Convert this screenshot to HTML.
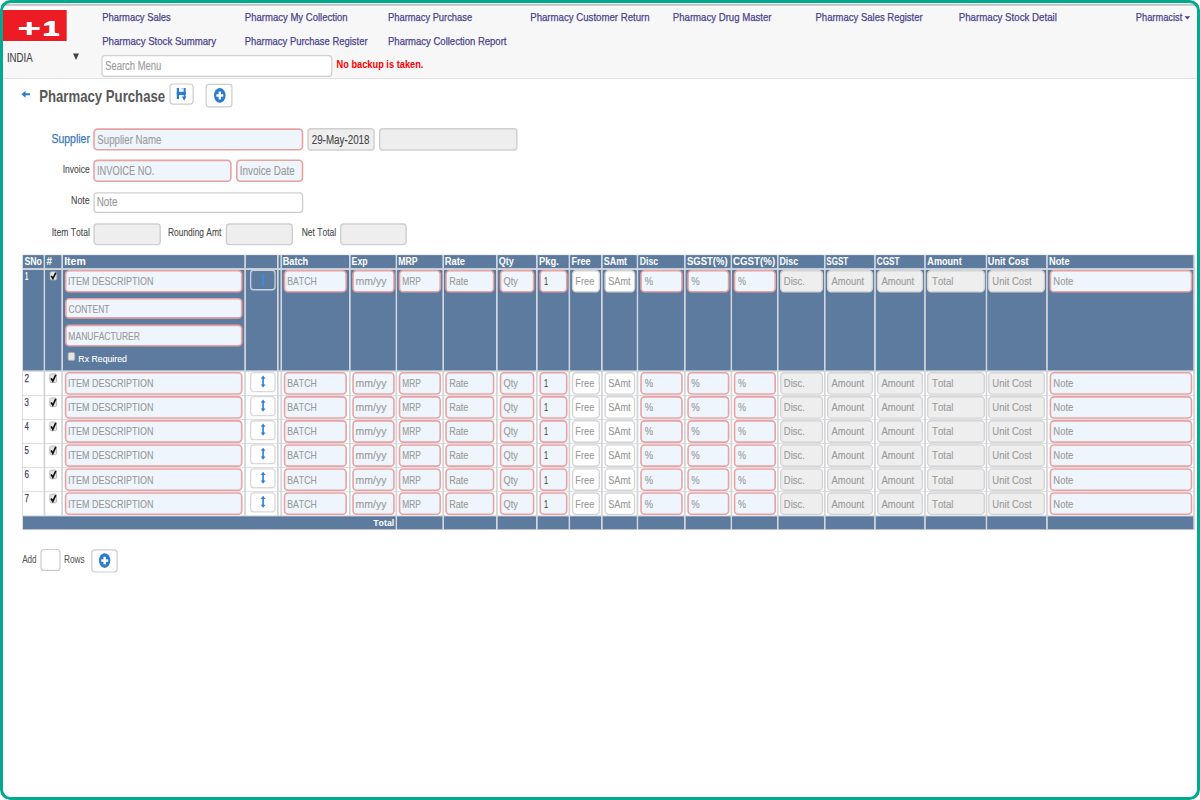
<!DOCTYPE html>
<html><head><meta charset="utf-8"><style>
html,body{margin:0;padding:0;background:#fff;}
svg{display:block;font-family:"Liberation Sans",sans-serif;font-kerning:none;}
</style></head><body>
<svg width="1200" height="800" viewBox="0 0 1200 800">
<defs><clipPath id="fr"><rect x="0" y="0" width="1200" height="800" rx="10" ry="10"/></clipPath></defs>
<rect x="0" y="0" width="1200" height="800" fill="#fff"/>
<g clip-path="url(#fr)">
<rect x="0.00" y="0.00" width="1200.00" height="79.00" rx="0.00" fill="#f7f7f7"/>
<rect x="0.00" y="3.00" width="1200.00" height="1.00" rx="0.00" fill="#efe6e8"/>
<rect x="0.00" y="4.00" width="1200.00" height="2.00" rx="0.00" fill="#c8c6c9"/>
<rect x="0.00" y="6.00" width="1200.00" height="1.00" rx="0.00" fill="#ffffff"/>
<rect x="0.00" y="78.00" width="1200.00" height="1.00" rx="0.00" fill="#e2e2e2"/>
<rect x="3.00" y="6.00" width="65.00" height="37.00" rx="0.00" fill="#fbfdfd"/>
<rect x="3.00" y="10.00" width="63.70" height="31.00" rx="0.00" fill="#ed1c24"/>
<rect x="18.80" y="27.00" width="20.80" height="3.00" rx="0.00" fill="#ffffff"/>
<rect x="26.70" y="22.00" width="5.00" height="13.00" rx="0.00" fill="#ffffff"/>
<path d="M44 24.1 Q46.5 22.2 49.8 21 L54.75 21 L54.75 32.6 Q55.3 33.3 59.25 33.4 L59.25 36 L43.75 36 L43.75 33.4 Q48.7 33.3 49.25 32.6 L49.25 25.3 Q46.2 25.3 44.7 25.9 Q43.5 25.6 44 24.1 Z" fill="#fff"/>
<text x="102.23" y="21.00" font-size="11.00" fill="#4a438e" stroke="#4a438e" stroke-width="0.25" textLength="68.51" lengthAdjust="spacingAndGlyphs">Pharmacy Sales</text>
<text x="244.82" y="21.00" font-size="11.00" fill="#4a438e" stroke="#4a438e" stroke-width="0.25" textLength="102.80" lengthAdjust="spacingAndGlyphs">Pharmacy My Collection</text>
<text x="388.03" y="21.00" font-size="11.00" fill="#4a438e" stroke="#4a438e" stroke-width="0.25" textLength="84.08" lengthAdjust="spacingAndGlyphs">Pharmacy Purchase</text>
<text x="530.21" y="21.00" font-size="11.00" fill="#4a438e" stroke="#4a438e" stroke-width="0.25" textLength="119.42" lengthAdjust="spacingAndGlyphs">Pharmacy Customer Return</text>
<text x="672.81" y="21.00" font-size="11.00" fill="#4a438e" stroke="#4a438e" stroke-width="0.25" textLength="98.75" lengthAdjust="spacingAndGlyphs">Pharmacy Drug Master</text>
<text x="815.52" y="21.00" font-size="11.00" fill="#4a438e" stroke="#4a438e" stroke-width="0.25" textLength="107.14" lengthAdjust="spacingAndGlyphs">Pharmacy Sales Register</text>
<text x="958.70" y="21.00" font-size="11.00" fill="#4a438e" stroke="#4a438e" stroke-width="0.25" textLength="98.15" lengthAdjust="spacingAndGlyphs">Pharmacy Stock Detail</text>
<text x="102.21" y="44.70" font-size="11.00" fill="#4a438e" stroke="#4a438e" stroke-width="0.25" textLength="113.81" lengthAdjust="spacingAndGlyphs">Pharmacy Stock Summary</text>
<text x="244.83" y="44.70" font-size="11.00" fill="#4a438e" stroke="#4a438e" stroke-width="0.25" textLength="122.73" lengthAdjust="spacingAndGlyphs">Pharmacy Purchase Register</text>
<text x="388.02" y="44.70" font-size="11.00" fill="#4a438e" stroke="#4a438e" stroke-width="0.25" textLength="118.45" lengthAdjust="spacingAndGlyphs">Pharmacy Collection Report</text>
<text x="1135.84" y="21.00" font-size="11.00" fill="#4a438e" stroke="#4a438e" stroke-width="0.25" textLength="46.43" lengthAdjust="spacingAndGlyphs">Pharmacist</text>
<path d="M1184.5 16.2 L1190.3 16.2 L1187.4 19.4 Z" fill="#4a438e"/>
<text x="6.91" y="61.70" font-size="12.00" fill="#444444" stroke="#444444" stroke-width="0.10" textLength="25.81" lengthAdjust="spacingAndGlyphs">INDIA</text>
<path d="M73 53.5 L79 53.5 L76 60 Z" fill="#444"/>
<rect x="102.00" y="55.60" width="229.80" height="20.80" rx="3.00" fill="#ffffff" stroke="#cfcfcf" stroke-width="1.20"/>
<text x="105.17" y="70.40" font-size="12.00" fill="#9a9a9a" stroke="#9a9a9a" stroke-width="0.12" textLength="56.05" lengthAdjust="spacingAndGlyphs">Search Menu</text>
<text x="336.48" y="67.70" font-size="10.00" fill="#ff0000" font-weight="bold" textLength="86.96" lengthAdjust="spacingAndGlyphs">No backup is taken.</text>
<path d="M21.5 94.2 L25.5 90.8 L25.5 93.2 L30 93.2 L30 95.2 L25.5 95.2 L25.5 97.7 Z" fill="#2b7bd0"/>
<text x="39.17" y="101.75" font-size="16.50" fill="#585858" font-weight="bold" textLength="125.98" lengthAdjust="spacingAndGlyphs">Pharmacy Purchase</text>
<rect x="170.00" y="84.00" width="23.15" height="20.10" rx="3.00" fill="#ffffff" stroke="#cccccc" stroke-width="1.20"/>
<g fill="#2b7bd0"><rect x="176.8" y="87.9" width="2.2" height="11.1"/><rect x="176.8" y="91.8" width="8.9" height="3.3"/><rect x="183.6" y="88" width="2.1" height="7.2" rx="0.6"/><rect x="181.4" y="88" width="1.2" height="1.6" opacity="0.5"/><rect x="183.8" y="95" width="1.6" height="2.5"/><path d="M181.9 96.6 L186.4 96.6 L184.15 100.8 Z"/></g>
<rect x="206.20" y="84.35" width="25.70" height="22.55" rx="3.00" fill="#ffffff" stroke="#cccccc" stroke-width="1.20"/>
<ellipse cx="219.8" cy="95.45" rx="5.8" ry="7.35" fill="#2b7bd0"/><rect x="216.3" y="94.3" width="7" height="2.4" fill="#fff"/><rect x="218.6" y="91.6" width="2.4" height="7.8" fill="#fff"/>
<text x="51.53" y="142.50" font-size="12.00" fill="#3b7ac0" stroke="#3b7ac0" stroke-width="0.25" textLength="38.35" lengthAdjust="spacingAndGlyphs">Supplier</text>
<rect x="94.00" y="129.10" width="208.50" height="20.70" rx="3.50" fill="#eef5fd" stroke="#e8a2a2" stroke-width="1.60"/>
<text x="97.36" y="143.75" font-size="12.00" fill="#9a9a9a" stroke="#9a9a9a" stroke-width="0.12" textLength="64.02" lengthAdjust="spacingAndGlyphs">Supplier Name</text>
<rect x="308.00" y="128.70" width="66.05" height="21.30" rx="3.00" fill="#eeeeee" stroke="#cfcfcf" stroke-width="1.40"/>
<text x="311.71" y="144.00" font-size="12.00" fill="#444444" stroke="#444444" stroke-width="0.10" textLength="57.82" lengthAdjust="spacingAndGlyphs">29-May-2018</text>
<rect x="379.70" y="128.70" width="137.20" height="21.30" rx="3.00" fill="#eeeeee" stroke="#cfcfcf" stroke-width="1.40"/>
<text x="62.71" y="172.50" font-size="10.50" fill="#484848" stroke="#484848" stroke-width="0.10" textLength="26.96" lengthAdjust="spacingAndGlyphs">Invoice</text>
<rect x="94.00" y="160.40" width="136.90" height="20.90" rx="3.50" fill="#eef5fd" stroke="#e8a2a2" stroke-width="1.60"/>
<text x="96.94" y="174.60" font-size="12.00" fill="#9a9a9a" stroke="#9a9a9a" stroke-width="0.12" textLength="57.36" lengthAdjust="spacingAndGlyphs">INVOICE NO.</text>
<rect x="236.80" y="160.20" width="65.70" height="21.10" rx="3.50" fill="#eef5fd" stroke="#e8a2a2" stroke-width="1.60"/>
<text x="239.79" y="174.60" font-size="12.00" fill="#9a9a9a" stroke="#9a9a9a" stroke-width="0.12" textLength="54.95" lengthAdjust="spacingAndGlyphs">Invoice Date</text>
<text x="71.08" y="204.10" font-size="10.50" fill="#484848" stroke="#484848" stroke-width="0.10" textLength="18.61" lengthAdjust="spacingAndGlyphs">Note</text>
<rect x="94.10" y="192.90" width="208.50" height="19.50" rx="3.00" fill="#ffffff" stroke="#cfcfcf" stroke-width="1.40"/>
<text x="96.69" y="206.40" font-size="12.00" fill="#9a9a9a" stroke="#9a9a9a" stroke-width="0.12" textLength="20.95" lengthAdjust="spacingAndGlyphs">Note</text>
<text x="51.71" y="235.60" font-size="10.50" fill="#484848" stroke="#484848" stroke-width="0.10" textLength="38.17" lengthAdjust="spacingAndGlyphs">Item Total</text>
<rect x="94.10" y="223.95" width="66.10" height="20.65" rx="3.00" fill="#eeeeee" stroke="#cfcfcf" stroke-width="1.40"/>
<text x="167.91" y="235.60" font-size="10.50" fill="#484848" stroke="#484848" stroke-width="0.10" textLength="53.45" lengthAdjust="spacingAndGlyphs">Rounding Amt</text>
<rect x="226.40" y="223.95" width="65.90" height="20.65" rx="3.00" fill="#eeeeee" stroke="#cfcfcf" stroke-width="1.40"/>
<text x="301.70" y="235.60" font-size="10.50" fill="#484848" stroke="#484848" stroke-width="0.10" textLength="34.57" lengthAdjust="spacingAndGlyphs">Net Total</text>
<rect x="340.70" y="223.95" width="65.40" height="20.65" rx="3.00" fill="#eeeeee" stroke="#cfcfcf" stroke-width="1.40"/>
<rect x="22.20" y="254.60" width="1172.80" height="275.40" rx="0.00" fill="#d2d5da"/>
<rect x="23.40" y="255.70" width="19.70" height="12.00" rx="0.00" fill="#5d7b9e" stroke="#52729a" stroke-width="0.80"/>
<rect x="23.40" y="270.40" width="19.70" height="99.50" rx="0.00" fill="#5d7b9e" stroke="#52729a" stroke-width="0.80"/>
<rect x="23.00" y="371.80" width="20.50" height="23.30" rx="0.00" fill="#ffffff"/>
<rect x="23.00" y="395.85" width="20.50" height="23.30" rx="0.00" fill="#ffffff"/>
<rect x="23.00" y="419.90" width="20.50" height="23.30" rx="0.00" fill="#ffffff"/>
<rect x="23.00" y="443.95" width="20.50" height="23.30" rx="0.00" fill="#ffffff"/>
<rect x="23.00" y="468.00" width="20.50" height="23.30" rx="0.00" fill="#ffffff"/>
<rect x="23.00" y="492.05" width="20.50" height="23.30" rx="0.00" fill="#ffffff"/>
<rect x="45.65" y="255.70" width="15.20" height="12.00" rx="0.00" fill="#5d7b9e" stroke="#52729a" stroke-width="0.80"/>
<rect x="45.65" y="270.40" width="15.20" height="99.50" rx="0.00" fill="#5d7b9e" stroke="#52729a" stroke-width="0.80"/>
<rect x="45.25" y="371.80" width="16.00" height="23.30" rx="0.00" fill="#ffffff"/>
<rect x="45.25" y="395.85" width="16.00" height="23.30" rx="0.00" fill="#ffffff"/>
<rect x="45.25" y="419.90" width="16.00" height="23.30" rx="0.00" fill="#ffffff"/>
<rect x="45.25" y="443.95" width="16.00" height="23.30" rx="0.00" fill="#ffffff"/>
<rect x="45.25" y="468.00" width="16.00" height="23.30" rx="0.00" fill="#ffffff"/>
<rect x="45.25" y="492.05" width="16.00" height="23.30" rx="0.00" fill="#ffffff"/>
<rect x="63.40" y="255.70" width="180.40" height="12.00" rx="0.00" fill="#5d7b9e" stroke="#52729a" stroke-width="0.80"/>
<rect x="63.40" y="270.40" width="180.40" height="99.50" rx="0.00" fill="#5d7b9e" stroke="#52729a" stroke-width="0.80"/>
<rect x="63.00" y="371.80" width="181.20" height="23.30" rx="0.00" fill="#ffffff"/>
<rect x="63.00" y="395.85" width="181.20" height="23.30" rx="0.00" fill="#ffffff"/>
<rect x="63.00" y="419.90" width="181.20" height="23.30" rx="0.00" fill="#ffffff"/>
<rect x="63.00" y="443.95" width="181.20" height="23.30" rx="0.00" fill="#ffffff"/>
<rect x="63.00" y="468.00" width="181.20" height="23.30" rx="0.00" fill="#ffffff"/>
<rect x="63.00" y="492.05" width="181.20" height="23.30" rx="0.00" fill="#ffffff"/>
<rect x="246.35" y="255.70" width="30.25" height="12.00" rx="0.00" fill="#5d7b9e" stroke="#52729a" stroke-width="0.80"/>
<rect x="246.35" y="270.40" width="30.25" height="99.50" rx="0.00" fill="#5d7b9e" stroke="#52729a" stroke-width="0.80"/>
<rect x="245.95" y="371.80" width="31.05" height="23.30" rx="0.00" fill="#ffffff"/>
<rect x="245.95" y="395.85" width="31.05" height="23.30" rx="0.00" fill="#ffffff"/>
<rect x="245.95" y="419.90" width="31.05" height="23.30" rx="0.00" fill="#ffffff"/>
<rect x="245.95" y="443.95" width="31.05" height="23.30" rx="0.00" fill="#ffffff"/>
<rect x="245.95" y="468.00" width="31.05" height="23.30" rx="0.00" fill="#ffffff"/>
<rect x="245.95" y="492.05" width="31.05" height="23.30" rx="0.00" fill="#ffffff"/>
<rect x="279.15" y="255.70" width="0.85" height="12.00" rx="0.00" fill="#5d7b9e" stroke="#52729a" stroke-width="0.80"/>
<rect x="279.15" y="270.40" width="0.85" height="99.50" rx="0.00" fill="#5d7b9e" stroke="#52729a" stroke-width="0.80"/>
<rect x="278.75" y="371.80" width="1.65" height="23.30" rx="0.00" fill="#ffffff"/>
<rect x="278.75" y="395.85" width="1.65" height="23.30" rx="0.00" fill="#ffffff"/>
<rect x="278.75" y="419.90" width="1.65" height="23.30" rx="0.00" fill="#ffffff"/>
<rect x="278.75" y="443.95" width="1.65" height="23.30" rx="0.00" fill="#ffffff"/>
<rect x="278.75" y="468.00" width="1.65" height="23.30" rx="0.00" fill="#ffffff"/>
<rect x="278.75" y="492.05" width="1.65" height="23.30" rx="0.00" fill="#ffffff"/>
<rect x="282.55" y="255.70" width="66.05" height="12.00" rx="0.00" fill="#5d7b9e" stroke="#52729a" stroke-width="0.80"/>
<rect x="282.55" y="270.40" width="66.05" height="99.50" rx="0.00" fill="#5d7b9e" stroke="#52729a" stroke-width="0.80"/>
<rect x="282.15" y="371.80" width="66.85" height="23.30" rx="0.00" fill="#ffffff"/>
<rect x="282.15" y="395.85" width="66.85" height="23.30" rx="0.00" fill="#ffffff"/>
<rect x="282.15" y="419.90" width="66.85" height="23.30" rx="0.00" fill="#ffffff"/>
<rect x="282.15" y="443.95" width="66.85" height="23.30" rx="0.00" fill="#ffffff"/>
<rect x="282.15" y="468.00" width="66.85" height="23.30" rx="0.00" fill="#ffffff"/>
<rect x="282.15" y="492.05" width="66.85" height="23.30" rx="0.00" fill="#ffffff"/>
<rect x="351.15" y="255.70" width="43.95" height="12.00" rx="0.00" fill="#5d7b9e" stroke="#52729a" stroke-width="0.80"/>
<rect x="351.15" y="270.40" width="43.95" height="99.50" rx="0.00" fill="#5d7b9e" stroke="#52729a" stroke-width="0.80"/>
<rect x="350.75" y="371.80" width="44.75" height="23.30" rx="0.00" fill="#ffffff"/>
<rect x="350.75" y="395.85" width="44.75" height="23.30" rx="0.00" fill="#ffffff"/>
<rect x="350.75" y="419.90" width="44.75" height="23.30" rx="0.00" fill="#ffffff"/>
<rect x="350.75" y="443.95" width="44.75" height="23.30" rx="0.00" fill="#ffffff"/>
<rect x="350.75" y="468.00" width="44.75" height="23.30" rx="0.00" fill="#ffffff"/>
<rect x="350.75" y="492.05" width="44.75" height="23.30" rx="0.00" fill="#ffffff"/>
<rect x="397.65" y="255.70" width="44.25" height="12.00" rx="0.00" fill="#5d7b9e" stroke="#52729a" stroke-width="0.80"/>
<rect x="397.65" y="270.40" width="44.25" height="99.50" rx="0.00" fill="#5d7b9e" stroke="#52729a" stroke-width="0.80"/>
<rect x="397.25" y="371.80" width="45.05" height="23.30" rx="0.00" fill="#ffffff"/>
<rect x="397.25" y="395.85" width="45.05" height="23.30" rx="0.00" fill="#ffffff"/>
<rect x="397.25" y="419.90" width="45.05" height="23.30" rx="0.00" fill="#ffffff"/>
<rect x="397.25" y="443.95" width="45.05" height="23.30" rx="0.00" fill="#ffffff"/>
<rect x="397.25" y="468.00" width="45.05" height="23.30" rx="0.00" fill="#ffffff"/>
<rect x="397.25" y="492.05" width="45.05" height="23.30" rx="0.00" fill="#ffffff"/>
<rect x="444.45" y="255.70" width="51.15" height="12.00" rx="0.00" fill="#5d7b9e" stroke="#52729a" stroke-width="0.80"/>
<rect x="444.45" y="270.40" width="51.15" height="99.50" rx="0.00" fill="#5d7b9e" stroke="#52729a" stroke-width="0.80"/>
<rect x="444.05" y="371.80" width="51.95" height="23.30" rx="0.00" fill="#ffffff"/>
<rect x="444.05" y="395.85" width="51.95" height="23.30" rx="0.00" fill="#ffffff"/>
<rect x="444.05" y="419.90" width="51.95" height="23.30" rx="0.00" fill="#ffffff"/>
<rect x="444.05" y="443.95" width="51.95" height="23.30" rx="0.00" fill="#ffffff"/>
<rect x="444.05" y="468.00" width="51.95" height="23.30" rx="0.00" fill="#ffffff"/>
<rect x="444.05" y="492.05" width="51.95" height="23.30" rx="0.00" fill="#ffffff"/>
<rect x="498.15" y="255.70" width="37.45" height="12.00" rx="0.00" fill="#5d7b9e" stroke="#52729a" stroke-width="0.80"/>
<rect x="498.15" y="270.40" width="37.45" height="99.50" rx="0.00" fill="#5d7b9e" stroke="#52729a" stroke-width="0.80"/>
<rect x="497.75" y="371.80" width="38.25" height="23.30" rx="0.00" fill="#ffffff"/>
<rect x="497.75" y="395.85" width="38.25" height="23.30" rx="0.00" fill="#ffffff"/>
<rect x="497.75" y="419.90" width="38.25" height="23.30" rx="0.00" fill="#ffffff"/>
<rect x="497.75" y="443.95" width="38.25" height="23.30" rx="0.00" fill="#ffffff"/>
<rect x="497.75" y="468.00" width="38.25" height="23.30" rx="0.00" fill="#ffffff"/>
<rect x="497.75" y="492.05" width="38.25" height="23.30" rx="0.00" fill="#ffffff"/>
<rect x="538.15" y="255.70" width="29.95" height="12.00" rx="0.00" fill="#5d7b9e" stroke="#52729a" stroke-width="0.80"/>
<rect x="538.15" y="270.40" width="29.95" height="99.50" rx="0.00" fill="#5d7b9e" stroke="#52729a" stroke-width="0.80"/>
<rect x="537.75" y="371.80" width="30.75" height="23.30" rx="0.00" fill="#ffffff"/>
<rect x="537.75" y="395.85" width="30.75" height="23.30" rx="0.00" fill="#ffffff"/>
<rect x="537.75" y="419.90" width="30.75" height="23.30" rx="0.00" fill="#ffffff"/>
<rect x="537.75" y="443.95" width="30.75" height="23.30" rx="0.00" fill="#ffffff"/>
<rect x="537.75" y="468.00" width="30.75" height="23.30" rx="0.00" fill="#ffffff"/>
<rect x="537.75" y="492.05" width="30.75" height="23.30" rx="0.00" fill="#ffffff"/>
<rect x="570.65" y="255.70" width="29.95" height="12.00" rx="0.00" fill="#5d7b9e" stroke="#52729a" stroke-width="0.80"/>
<rect x="570.65" y="270.40" width="29.95" height="99.50" rx="0.00" fill="#5d7b9e" stroke="#52729a" stroke-width="0.80"/>
<rect x="570.25" y="371.80" width="30.75" height="23.30" rx="0.00" fill="#ffffff"/>
<rect x="570.25" y="395.85" width="30.75" height="23.30" rx="0.00" fill="#ffffff"/>
<rect x="570.25" y="419.90" width="30.75" height="23.30" rx="0.00" fill="#ffffff"/>
<rect x="570.25" y="443.95" width="30.75" height="23.30" rx="0.00" fill="#ffffff"/>
<rect x="570.25" y="468.00" width="30.75" height="23.30" rx="0.00" fill="#ffffff"/>
<rect x="570.25" y="492.05" width="30.75" height="23.30" rx="0.00" fill="#ffffff"/>
<rect x="603.15" y="255.70" width="33.05" height="12.00" rx="0.00" fill="#5d7b9e" stroke="#52729a" stroke-width="0.80"/>
<rect x="603.15" y="270.40" width="33.05" height="99.50" rx="0.00" fill="#5d7b9e" stroke="#52729a" stroke-width="0.80"/>
<rect x="602.75" y="371.80" width="33.85" height="23.30" rx="0.00" fill="#ffffff"/>
<rect x="602.75" y="395.85" width="33.85" height="23.30" rx="0.00" fill="#ffffff"/>
<rect x="602.75" y="419.90" width="33.85" height="23.30" rx="0.00" fill="#ffffff"/>
<rect x="602.75" y="443.95" width="33.85" height="23.30" rx="0.00" fill="#ffffff"/>
<rect x="602.75" y="468.00" width="33.85" height="23.30" rx="0.00" fill="#ffffff"/>
<rect x="602.75" y="492.05" width="33.85" height="23.30" rx="0.00" fill="#ffffff"/>
<rect x="638.75" y="255.70" width="44.85" height="12.00" rx="0.00" fill="#5d7b9e" stroke="#52729a" stroke-width="0.80"/>
<rect x="638.75" y="270.40" width="44.85" height="99.50" rx="0.00" fill="#5d7b9e" stroke="#52729a" stroke-width="0.80"/>
<rect x="638.35" y="371.80" width="45.65" height="23.30" rx="0.00" fill="#ffffff"/>
<rect x="638.35" y="395.85" width="45.65" height="23.30" rx="0.00" fill="#ffffff"/>
<rect x="638.35" y="419.90" width="45.65" height="23.30" rx="0.00" fill="#ffffff"/>
<rect x="638.35" y="443.95" width="45.65" height="23.30" rx="0.00" fill="#ffffff"/>
<rect x="638.35" y="468.00" width="45.65" height="23.30" rx="0.00" fill="#ffffff"/>
<rect x="638.35" y="492.05" width="45.65" height="23.30" rx="0.00" fill="#ffffff"/>
<rect x="686.15" y="255.70" width="43.95" height="12.00" rx="0.00" fill="#5d7b9e" stroke="#52729a" stroke-width="0.80"/>
<rect x="686.15" y="270.40" width="43.95" height="99.50" rx="0.00" fill="#5d7b9e" stroke="#52729a" stroke-width="0.80"/>
<rect x="685.75" y="371.80" width="44.75" height="23.30" rx="0.00" fill="#ffffff"/>
<rect x="685.75" y="395.85" width="44.75" height="23.30" rx="0.00" fill="#ffffff"/>
<rect x="685.75" y="419.90" width="44.75" height="23.30" rx="0.00" fill="#ffffff"/>
<rect x="685.75" y="443.95" width="44.75" height="23.30" rx="0.00" fill="#ffffff"/>
<rect x="685.75" y="468.00" width="44.75" height="23.30" rx="0.00" fill="#ffffff"/>
<rect x="685.75" y="492.05" width="44.75" height="23.30" rx="0.00" fill="#ffffff"/>
<rect x="732.65" y="255.70" width="43.85" height="12.00" rx="0.00" fill="#5d7b9e" stroke="#52729a" stroke-width="0.80"/>
<rect x="732.65" y="270.40" width="43.85" height="99.50" rx="0.00" fill="#5d7b9e" stroke="#52729a" stroke-width="0.80"/>
<rect x="732.25" y="371.80" width="44.65" height="23.30" rx="0.00" fill="#ffffff"/>
<rect x="732.25" y="395.85" width="44.65" height="23.30" rx="0.00" fill="#ffffff"/>
<rect x="732.25" y="419.90" width="44.65" height="23.30" rx="0.00" fill="#ffffff"/>
<rect x="732.25" y="443.95" width="44.65" height="23.30" rx="0.00" fill="#ffffff"/>
<rect x="732.25" y="468.00" width="44.65" height="23.30" rx="0.00" fill="#ffffff"/>
<rect x="732.25" y="492.05" width="44.65" height="23.30" rx="0.00" fill="#ffffff"/>
<rect x="779.05" y="255.70" width="44.45" height="12.00" rx="0.00" fill="#5d7b9e" stroke="#52729a" stroke-width="0.80"/>
<rect x="779.05" y="270.40" width="44.45" height="99.50" rx="0.00" fill="#5d7b9e" stroke="#52729a" stroke-width="0.80"/>
<rect x="778.65" y="371.80" width="45.25" height="23.30" rx="0.00" fill="#ffffff"/>
<rect x="778.65" y="395.85" width="45.25" height="23.30" rx="0.00" fill="#ffffff"/>
<rect x="778.65" y="419.90" width="45.25" height="23.30" rx="0.00" fill="#ffffff"/>
<rect x="778.65" y="443.95" width="45.25" height="23.30" rx="0.00" fill="#ffffff"/>
<rect x="778.65" y="468.00" width="45.25" height="23.30" rx="0.00" fill="#ffffff"/>
<rect x="778.65" y="492.05" width="45.25" height="23.30" rx="0.00" fill="#ffffff"/>
<rect x="826.05" y="255.70" width="47.65" height="12.00" rx="0.00" fill="#5d7b9e" stroke="#52729a" stroke-width="0.80"/>
<rect x="826.05" y="270.40" width="47.65" height="99.50" rx="0.00" fill="#5d7b9e" stroke="#52729a" stroke-width="0.80"/>
<rect x="825.65" y="371.80" width="48.45" height="23.30" rx="0.00" fill="#ffffff"/>
<rect x="825.65" y="395.85" width="48.45" height="23.30" rx="0.00" fill="#ffffff"/>
<rect x="825.65" y="419.90" width="48.45" height="23.30" rx="0.00" fill="#ffffff"/>
<rect x="825.65" y="443.95" width="48.45" height="23.30" rx="0.00" fill="#ffffff"/>
<rect x="825.65" y="468.00" width="48.45" height="23.30" rx="0.00" fill="#ffffff"/>
<rect x="825.65" y="492.05" width="48.45" height="23.30" rx="0.00" fill="#ffffff"/>
<rect x="876.25" y="255.70" width="47.45" height="12.00" rx="0.00" fill="#5d7b9e" stroke="#52729a" stroke-width="0.80"/>
<rect x="876.25" y="270.40" width="47.45" height="99.50" rx="0.00" fill="#5d7b9e" stroke="#52729a" stroke-width="0.80"/>
<rect x="875.85" y="371.80" width="48.25" height="23.30" rx="0.00" fill="#ffffff"/>
<rect x="875.85" y="395.85" width="48.25" height="23.30" rx="0.00" fill="#ffffff"/>
<rect x="875.85" y="419.90" width="48.25" height="23.30" rx="0.00" fill="#ffffff"/>
<rect x="875.85" y="443.95" width="48.25" height="23.30" rx="0.00" fill="#ffffff"/>
<rect x="875.85" y="468.00" width="48.25" height="23.30" rx="0.00" fill="#ffffff"/>
<rect x="875.85" y="492.05" width="48.25" height="23.30" rx="0.00" fill="#ffffff"/>
<rect x="926.25" y="255.70" width="58.95" height="12.00" rx="0.00" fill="#5d7b9e" stroke="#52729a" stroke-width="0.80"/>
<rect x="926.25" y="270.40" width="58.95" height="99.50" rx="0.00" fill="#5d7b9e" stroke="#52729a" stroke-width="0.80"/>
<rect x="925.85" y="371.80" width="59.75" height="23.30" rx="0.00" fill="#ffffff"/>
<rect x="925.85" y="395.85" width="59.75" height="23.30" rx="0.00" fill="#ffffff"/>
<rect x="925.85" y="419.90" width="59.75" height="23.30" rx="0.00" fill="#ffffff"/>
<rect x="925.85" y="443.95" width="59.75" height="23.30" rx="0.00" fill="#ffffff"/>
<rect x="925.85" y="468.00" width="59.75" height="23.30" rx="0.00" fill="#ffffff"/>
<rect x="925.85" y="492.05" width="59.75" height="23.30" rx="0.00" fill="#ffffff"/>
<rect x="987.75" y="255.70" width="57.95" height="12.00" rx="0.00" fill="#5d7b9e" stroke="#52729a" stroke-width="0.80"/>
<rect x="987.75" y="270.40" width="57.95" height="99.50" rx="0.00" fill="#5d7b9e" stroke="#52729a" stroke-width="0.80"/>
<rect x="987.35" y="371.80" width="58.75" height="23.30" rx="0.00" fill="#ffffff"/>
<rect x="987.35" y="395.85" width="58.75" height="23.30" rx="0.00" fill="#ffffff"/>
<rect x="987.35" y="419.90" width="58.75" height="23.30" rx="0.00" fill="#ffffff"/>
<rect x="987.35" y="443.95" width="58.75" height="23.30" rx="0.00" fill="#ffffff"/>
<rect x="987.35" y="468.00" width="58.75" height="23.30" rx="0.00" fill="#ffffff"/>
<rect x="987.35" y="492.05" width="58.75" height="23.30" rx="0.00" fill="#ffffff"/>
<rect x="1048.25" y="255.70" width="144.55" height="12.00" rx="0.00" fill="#5d7b9e" stroke="#52729a" stroke-width="0.80"/>
<rect x="1048.25" y="270.40" width="144.55" height="99.50" rx="0.00" fill="#5d7b9e" stroke="#52729a" stroke-width="0.80"/>
<rect x="1047.85" y="371.80" width="145.35" height="23.30" rx="0.00" fill="#ffffff"/>
<rect x="1047.85" y="395.85" width="145.35" height="23.30" rx="0.00" fill="#ffffff"/>
<rect x="1047.85" y="419.90" width="145.35" height="23.30" rx="0.00" fill="#ffffff"/>
<rect x="1047.85" y="443.95" width="145.35" height="23.30" rx="0.00" fill="#ffffff"/>
<rect x="1047.85" y="468.00" width="145.35" height="23.30" rx="0.00" fill="#ffffff"/>
<rect x="1047.85" y="492.05" width="145.35" height="23.30" rx="0.00" fill="#ffffff"/>
<rect x="23.40" y="516.90" width="371.70" height="11.90" rx="0.00" fill="#5d7b9e" stroke="#52729a" stroke-width="0.80"/>
<rect x="397.65" y="516.90" width="44.25" height="11.90" rx="0.00" fill="#5d7b9e" stroke="#52729a" stroke-width="0.80"/>
<rect x="444.45" y="516.90" width="51.15" height="11.90" rx="0.00" fill="#5d7b9e" stroke="#52729a" stroke-width="0.80"/>
<rect x="498.15" y="516.90" width="37.45" height="11.90" rx="0.00" fill="#5d7b9e" stroke="#52729a" stroke-width="0.80"/>
<rect x="538.15" y="516.90" width="29.95" height="11.90" rx="0.00" fill="#5d7b9e" stroke="#52729a" stroke-width="0.80"/>
<rect x="570.65" y="516.90" width="29.95" height="11.90" rx="0.00" fill="#5d7b9e" stroke="#52729a" stroke-width="0.80"/>
<rect x="603.15" y="516.90" width="33.05" height="11.90" rx="0.00" fill="#5d7b9e" stroke="#52729a" stroke-width="0.80"/>
<rect x="638.75" y="516.90" width="44.85" height="11.90" rx="0.00" fill="#5d7b9e" stroke="#52729a" stroke-width="0.80"/>
<rect x="686.15" y="516.90" width="43.95" height="11.90" rx="0.00" fill="#5d7b9e" stroke="#52729a" stroke-width="0.80"/>
<rect x="732.65" y="516.90" width="43.85" height="11.90" rx="0.00" fill="#5d7b9e" stroke="#52729a" stroke-width="0.80"/>
<rect x="779.05" y="516.90" width="44.45" height="11.90" rx="0.00" fill="#5d7b9e" stroke="#52729a" stroke-width="0.80"/>
<rect x="826.05" y="516.90" width="47.65" height="11.90" rx="0.00" fill="#5d7b9e" stroke="#52729a" stroke-width="0.80"/>
<rect x="876.25" y="516.90" width="47.45" height="11.90" rx="0.00" fill="#5d7b9e" stroke="#52729a" stroke-width="0.80"/>
<rect x="926.25" y="516.90" width="58.95" height="11.90" rx="0.00" fill="#5d7b9e" stroke="#52729a" stroke-width="0.80"/>
<rect x="987.75" y="516.90" width="57.95" height="11.90" rx="0.00" fill="#5d7b9e" stroke="#52729a" stroke-width="0.80"/>
<rect x="1048.25" y="516.90" width="144.55" height="11.90" rx="0.00" fill="#5d7b9e" stroke="#52729a" stroke-width="0.80"/>
<text x="373.20" y="525.50" font-size="9.50" fill="#ffffff" font-weight="bold" textLength="21.13" lengthAdjust="spacingAndGlyphs">Total</text>
<text x="24.45" y="265.00" font-size="10.20" fill="#ffffff" font-weight="bold" textLength="17.49" lengthAdjust="spacingAndGlyphs">SNo</text>
<text x="46.38" y="265.00" font-size="10.20" fill="#ffffff" font-weight="bold" textLength="5.48" lengthAdjust="spacingAndGlyphs">#</text>
<text x="64.20" y="265.00" font-size="10.20" fill="#ffffff" font-weight="bold" textLength="21.55" lengthAdjust="spacingAndGlyphs">Item</text>
<text x="282.69" y="265.00" font-size="10.20" fill="#ffffff" font-weight="bold" textLength="25.48" lengthAdjust="spacingAndGlyphs">Batch</text>
<text x="351.62" y="265.00" font-size="10.20" fill="#ffffff" font-weight="bold" textLength="15.94" lengthAdjust="spacingAndGlyphs">Exp</text>
<text x="398.22" y="265.00" font-size="10.20" fill="#ffffff" font-weight="bold" textLength="19.28" lengthAdjust="spacingAndGlyphs">MRP</text>
<text x="444.67" y="265.00" font-size="10.20" fill="#ffffff" font-weight="bold" textLength="20.35" lengthAdjust="spacingAndGlyphs">Rate</text>
<text x="498.68" y="265.00" font-size="10.20" fill="#ffffff" font-weight="bold" textLength="15.07" lengthAdjust="spacingAndGlyphs">Qty</text>
<text x="539.07" y="265.00" font-size="10.20" fill="#ffffff" font-weight="bold" textLength="19.77" lengthAdjust="spacingAndGlyphs">Pkg.</text>
<text x="571.60" y="265.00" font-size="10.20" fill="#ffffff" font-weight="bold" textLength="19.01" lengthAdjust="spacingAndGlyphs">Free</text>
<text x="603.79" y="265.00" font-size="10.20" fill="#ffffff" font-weight="bold" textLength="23.27" lengthAdjust="spacingAndGlyphs">SAmt</text>
<text x="639.72" y="265.00" font-size="10.20" fill="#ffffff" font-weight="bold" textLength="18.33" lengthAdjust="spacingAndGlyphs">Disc</text>
<text x="686.93" y="265.00" font-size="10.20" fill="#ffffff" font-weight="bold" textLength="40.75" lengthAdjust="spacingAndGlyphs">SGST(%)</text>
<text x="733.00" y="265.00" font-size="10.20" fill="#ffffff" font-weight="bold" textLength="42.18" lengthAdjust="spacingAndGlyphs">CGST(%)</text>
<text x="779.46" y="265.00" font-size="10.20" fill="#ffffff" font-weight="bold" textLength="18.60" lengthAdjust="spacingAndGlyphs">Disc</text>
<text x="826.32" y="265.00" font-size="10.20" fill="#ffffff" font-weight="bold" textLength="21.97" lengthAdjust="spacingAndGlyphs">SGST</text>
<text x="876.87" y="265.00" font-size="10.20" fill="#ffffff" font-weight="bold" textLength="22.67" lengthAdjust="spacingAndGlyphs">CGST</text>
<text x="927.32" y="265.00" font-size="10.20" fill="#ffffff" font-weight="bold" textLength="34.39" lengthAdjust="spacingAndGlyphs">Amount</text>
<text x="987.75" y="265.00" font-size="10.20" fill="#ffffff" font-weight="bold" textLength="40.81" lengthAdjust="spacingAndGlyphs">Unit Cost</text>
<text x="1048.98" y="265.00" font-size="10.20" fill="#ffffff" font-weight="bold" textLength="20.64" lengthAdjust="spacingAndGlyphs">Note</text>
<rect x="65.60" y="270.80" width="176.10" height="20.90" rx="3.50" fill="#eef5fd" stroke="#e8a2a2" stroke-width="1.60"/>
<text x="68.07" y="285.30" font-size="11.50" fill="#9a9a9a" stroke="#9a9a9a" stroke-width="0.12" textLength="85.57" lengthAdjust="spacingAndGlyphs">ITEM DESCRIPTION</text>
<rect x="250.65" y="270.25" width="24.40" height="19.50" rx="3.00" fill="none" stroke="#c9d3de" stroke-width="1.30"/>
<g fill="#3b8ce0"><rect x="262.30" y="275.50" width="1.6" height="8.10"/><path d="M260.70 276.70 L263.10 273.50 L265.50 276.70 Z"/><path d="M260.70 282.40 L263.10 285.60 L265.50 282.40 Z"/></g>
<rect x="284.55" y="270.80" width="61.55" height="20.90" rx="3.50" fill="#eef5fd" stroke="#e8a2a2" stroke-width="1.60"/>
<text x="287.29" y="285.30" font-size="11.50" fill="#9a9a9a" stroke="#9a9a9a" stroke-width="0.12" textLength="29.42" lengthAdjust="spacingAndGlyphs">BATCH</text>
<rect x="353.05" y="270.80" width="40.90" height="20.90" rx="3.50" fill="#eef5fd" stroke="#e8a2a2" stroke-width="1.60"/>
<text x="355.60" y="285.30" font-size="11.50" fill="#9a9a9a" stroke="#9a9a9a" stroke-width="0.12" textLength="30.82" lengthAdjust="spacingAndGlyphs">mm/yy</text>
<rect x="399.55" y="270.80" width="40.65" height="20.90" rx="3.50" fill="#eef5fd" stroke="#e8a2a2" stroke-width="1.60"/>
<text x="402.32" y="285.30" font-size="11.50" fill="#9a9a9a" stroke="#9a9a9a" stroke-width="0.12" textLength="18.52" lengthAdjust="spacingAndGlyphs">MRP</text>
<rect x="446.05" y="270.80" width="47.55" height="20.90" rx="3.50" fill="#eef5fd" stroke="#e8a2a2" stroke-width="1.60"/>
<text x="449.26" y="285.30" font-size="11.50" fill="#9a9a9a" stroke="#9a9a9a" stroke-width="0.12" textLength="19.15" lengthAdjust="spacingAndGlyphs">Rate</text>
<rect x="500.55" y="270.80" width="33.05" height="20.90" rx="3.50" fill="#eef5fd" stroke="#e8a2a2" stroke-width="1.60"/>
<text x="503.56" y="285.30" font-size="11.50" fill="#9a9a9a" stroke="#9a9a9a" stroke-width="0.12" textLength="14.46" lengthAdjust="spacingAndGlyphs">Qty</text>
<rect x="540.20" y="270.80" width="26.50" height="20.90" rx="3.50" fill="#eef5fd" stroke="#e8a2a2" stroke-width="1.60"/>
<text x="543.93" y="285.30" font-size="11.50" fill="#4a4a4a" stroke="#4a4a4a" stroke-width="0.12" textLength="4.13" lengthAdjust="spacingAndGlyphs">1</text>
<rect x="572.60" y="270.70" width="26.70" height="21.10" rx="3.50" fill="#ffffff" stroke="#d4d4d4" stroke-width="1.40"/>
<text x="575.34" y="285.30" font-size="11.50" fill="#9a9a9a" stroke="#9a9a9a" stroke-width="0.12" textLength="18.97" lengthAdjust="spacingAndGlyphs">Free</text>
<rect x="605.10" y="270.70" width="29.45" height="21.10" rx="3.50" fill="#ffffff" stroke="#d4d4d4" stroke-width="1.40"/>
<text x="608.18" y="285.30" font-size="11.50" fill="#9a9a9a" stroke="#9a9a9a" stroke-width="0.12" textLength="22.38" lengthAdjust="spacingAndGlyphs">SAmt</text>
<rect x="641.05" y="270.80" width="40.90" height="20.90" rx="3.50" fill="#eef5fd" stroke="#e8a2a2" stroke-width="1.60"/>
<text x="644.66" y="285.30" font-size="11.50" fill="#9a9a9a" stroke="#9a9a9a" stroke-width="0.12" textLength="8.37" lengthAdjust="spacingAndGlyphs">%</text>
<rect x="688.05" y="270.80" width="40.55" height="20.90" rx="3.50" fill="#eef5fd" stroke="#e8a2a2" stroke-width="1.60"/>
<text x="691.26" y="285.30" font-size="11.50" fill="#9a9a9a" stroke="#9a9a9a" stroke-width="0.12" textLength="8.48" lengthAdjust="spacingAndGlyphs">%</text>
<rect x="734.55" y="270.80" width="40.65" height="20.90" rx="3.50" fill="#eef5fd" stroke="#e8a2a2" stroke-width="1.60"/>
<text x="737.98" y="285.30" font-size="11.50" fill="#9a9a9a" stroke="#9a9a9a" stroke-width="0.12" textLength="8.05" lengthAdjust="spacingAndGlyphs">%</text>
<rect x="780.70" y="270.70" width="41.70" height="21.10" rx="3.50" fill="#eeeeee" stroke="#d4d4d4" stroke-width="1.40"/>
<text x="783.82" y="285.30" font-size="11.50" fill="#9a9a9a" stroke="#9a9a9a" stroke-width="0.12" textLength="21.04" lengthAdjust="spacingAndGlyphs">Disc.</text>
<rect x="827.60" y="270.70" width="44.80" height="21.10" rx="3.50" fill="#eeeeee" stroke="#d4d4d4" stroke-width="1.40"/>
<text x="831.48" y="285.30" font-size="11.50" fill="#9a9a9a" stroke="#9a9a9a" stroke-width="0.12" textLength="32.59" lengthAdjust="spacingAndGlyphs">Amount</text>
<rect x="877.60" y="270.70" width="44.80" height="21.10" rx="3.50" fill="#eeeeee" stroke="#d4d4d4" stroke-width="1.40"/>
<text x="881.38" y="285.30" font-size="11.50" fill="#9a9a9a" stroke="#9a9a9a" stroke-width="0.12" textLength="32.89" lengthAdjust="spacingAndGlyphs">Amount</text>
<rect x="927.60" y="270.70" width="56.70" height="21.10" rx="3.50" fill="#eeeeee" stroke="#d4d4d4" stroke-width="1.40"/>
<text x="932.09" y="285.30" font-size="11.50" fill="#9a9a9a" stroke="#9a9a9a" stroke-width="0.12" textLength="21.25" lengthAdjust="spacingAndGlyphs">Total</text>
<rect x="988.80" y="270.70" width="55.50" height="21.10" rx="3.50" fill="#eeeeee" stroke="#d4d4d4" stroke-width="1.40"/>
<text x="992.26" y="285.30" font-size="11.50" fill="#9a9a9a" stroke="#9a9a9a" stroke-width="0.12" textLength="39.41" lengthAdjust="spacingAndGlyphs">Unit Cost</text>
<rect x="1050.40" y="270.80" width="141.10" height="20.90" rx="3.50" fill="#eef5fd" stroke="#e8a2a2" stroke-width="1.60"/>
<text x="1053.32" y="285.30" font-size="11.50" fill="#9a9a9a" stroke="#9a9a9a" stroke-width="0.12" textLength="20.00" lengthAdjust="spacingAndGlyphs">Note</text>
<rect x="65.80" y="298.70" width="175.90" height="19.20" rx="3.50" fill="#eef5fd" stroke="#e8a2a2" stroke-width="1.60"/>
<text x="68.62" y="313.20" font-size="11.50" fill="#9a9a9a" stroke="#9a9a9a" stroke-width="0.12" textLength="40.77" lengthAdjust="spacingAndGlyphs">CONTENT</text>
<rect x="65.80" y="325.40" width="175.90" height="20.30" rx="3.50" fill="#eef5fd" stroke="#e8a2a2" stroke-width="1.60"/>
<text x="68.35" y="339.60" font-size="11.50" fill="#9a9a9a" stroke="#9a9a9a" stroke-width="0.12" textLength="71.55" lengthAdjust="spacingAndGlyphs">MANUFACTURER</text>
<rect x="68.10" y="352.50" width="6.70" height="7.90" rx="1.50" fill="#e4e4e4" stroke="#a9a9a9" stroke-width="0.80"/>
<text x="78.33" y="362.30" font-size="9.60" fill="#ffffff" stroke="#ffffff" stroke-width="0.10" textLength="48.63" lengthAdjust="spacingAndGlyphs">Rx Required</text>
<text x="24.93" y="279.60" font-size="10.00" fill="#ffffff" font-weight="bold" textLength="3.23" lengthAdjust="spacingAndGlyphs">1</text>
<rect x="50.00" y="271.65" width="6.70" height="8.35" rx="1.50" fill="#e6e6e6" stroke="#a9a9a9" stroke-width="0.80"/>
<path d="M51.20 275.82 L52.90 278.60 L55.90 272.55" fill="none" stroke="#111" stroke-width="1.7"/>
<rect x="65.60" y="372.80" width="176.10" height="21.20" rx="3.50" fill="#eef5fd" stroke="#e8a2a2" stroke-width="1.60"/>
<text x="68.07" y="387.30" font-size="11.50" fill="#9a9a9a" stroke="#9a9a9a" stroke-width="0.12" textLength="85.57" lengthAdjust="spacingAndGlyphs">ITEM DESCRIPTION</text>
<rect x="250.65" y="372.65" width="24.40" height="18.90" rx="3.00" fill="#ffffff" stroke="#d9d9d9" stroke-width="1.30"/>
<g fill="#2d7fd3"><rect x="262.30" y="377.50" width="1.6" height="8.10"/><path d="M260.70 378.70 L263.10 375.50 L265.50 378.70 Z"/><path d="M260.70 384.40 L263.10 387.60 L265.50 384.40 Z"/></g>
<rect x="284.55" y="372.80" width="61.55" height="21.20" rx="3.50" fill="#eef5fd" stroke="#e8a2a2" stroke-width="1.60"/>
<text x="287.29" y="387.30" font-size="11.50" fill="#9a9a9a" stroke="#9a9a9a" stroke-width="0.12" textLength="29.42" lengthAdjust="spacingAndGlyphs">BATCH</text>
<rect x="353.05" y="372.80" width="40.90" height="21.20" rx="3.50" fill="#eef5fd" stroke="#e8a2a2" stroke-width="1.60"/>
<text x="355.60" y="387.30" font-size="11.50" fill="#9a9a9a" stroke="#9a9a9a" stroke-width="0.12" textLength="30.82" lengthAdjust="spacingAndGlyphs">mm/yy</text>
<rect x="399.55" y="372.80" width="40.65" height="21.20" rx="3.50" fill="#eef5fd" stroke="#e8a2a2" stroke-width="1.60"/>
<text x="402.32" y="387.30" font-size="11.50" fill="#9a9a9a" stroke="#9a9a9a" stroke-width="0.12" textLength="18.52" lengthAdjust="spacingAndGlyphs">MRP</text>
<rect x="446.05" y="372.80" width="47.55" height="21.20" rx="3.50" fill="#eef5fd" stroke="#e8a2a2" stroke-width="1.60"/>
<text x="449.26" y="387.30" font-size="11.50" fill="#9a9a9a" stroke="#9a9a9a" stroke-width="0.12" textLength="19.15" lengthAdjust="spacingAndGlyphs">Rate</text>
<rect x="500.55" y="372.80" width="33.05" height="21.20" rx="3.50" fill="#eef5fd" stroke="#e8a2a2" stroke-width="1.60"/>
<text x="503.56" y="387.30" font-size="11.50" fill="#9a9a9a" stroke="#9a9a9a" stroke-width="0.12" textLength="14.46" lengthAdjust="spacingAndGlyphs">Qty</text>
<rect x="540.20" y="372.80" width="26.50" height="21.20" rx="3.50" fill="#eef5fd" stroke="#e8a2a2" stroke-width="1.60"/>
<text x="543.93" y="387.30" font-size="11.50" fill="#4a4a4a" stroke="#4a4a4a" stroke-width="0.12" textLength="4.13" lengthAdjust="spacingAndGlyphs">1</text>
<rect x="572.60" y="372.70" width="26.70" height="21.40" rx="3.50" fill="#ffffff" stroke="#d4d4d4" stroke-width="1.40"/>
<text x="575.34" y="387.30" font-size="11.50" fill="#9a9a9a" stroke="#9a9a9a" stroke-width="0.12" textLength="18.97" lengthAdjust="spacingAndGlyphs">Free</text>
<rect x="605.10" y="372.70" width="29.45" height="21.40" rx="3.50" fill="#ffffff" stroke="#d4d4d4" stroke-width="1.40"/>
<text x="608.18" y="387.30" font-size="11.50" fill="#9a9a9a" stroke="#9a9a9a" stroke-width="0.12" textLength="22.38" lengthAdjust="spacingAndGlyphs">SAmt</text>
<rect x="641.05" y="372.80" width="40.90" height="21.20" rx="3.50" fill="#eef5fd" stroke="#e8a2a2" stroke-width="1.60"/>
<text x="644.66" y="387.30" font-size="11.50" fill="#9a9a9a" stroke="#9a9a9a" stroke-width="0.12" textLength="8.37" lengthAdjust="spacingAndGlyphs">%</text>
<rect x="688.05" y="372.80" width="40.55" height="21.20" rx="3.50" fill="#eef5fd" stroke="#e8a2a2" stroke-width="1.60"/>
<text x="691.26" y="387.30" font-size="11.50" fill="#9a9a9a" stroke="#9a9a9a" stroke-width="0.12" textLength="8.48" lengthAdjust="spacingAndGlyphs">%</text>
<rect x="734.55" y="372.80" width="40.65" height="21.20" rx="3.50" fill="#eef5fd" stroke="#e8a2a2" stroke-width="1.60"/>
<text x="737.98" y="387.30" font-size="11.50" fill="#9a9a9a" stroke="#9a9a9a" stroke-width="0.12" textLength="8.05" lengthAdjust="spacingAndGlyphs">%</text>
<rect x="780.70" y="372.70" width="41.70" height="21.40" rx="3.50" fill="#eeeeee" stroke="#d4d4d4" stroke-width="1.40"/>
<text x="783.82" y="387.30" font-size="11.50" fill="#9a9a9a" stroke="#9a9a9a" stroke-width="0.12" textLength="21.04" lengthAdjust="spacingAndGlyphs">Disc.</text>
<rect x="827.60" y="372.70" width="44.80" height="21.40" rx="3.50" fill="#eeeeee" stroke="#d4d4d4" stroke-width="1.40"/>
<text x="831.48" y="387.30" font-size="11.50" fill="#9a9a9a" stroke="#9a9a9a" stroke-width="0.12" textLength="32.59" lengthAdjust="spacingAndGlyphs">Amount</text>
<rect x="877.60" y="372.70" width="44.80" height="21.40" rx="3.50" fill="#eeeeee" stroke="#d4d4d4" stroke-width="1.40"/>
<text x="881.38" y="387.30" font-size="11.50" fill="#9a9a9a" stroke="#9a9a9a" stroke-width="0.12" textLength="32.89" lengthAdjust="spacingAndGlyphs">Amount</text>
<rect x="927.60" y="372.70" width="56.70" height="21.40" rx="3.50" fill="#eeeeee" stroke="#d4d4d4" stroke-width="1.40"/>
<text x="932.09" y="387.30" font-size="11.50" fill="#9a9a9a" stroke="#9a9a9a" stroke-width="0.12" textLength="21.25" lengthAdjust="spacingAndGlyphs">Total</text>
<rect x="988.80" y="372.70" width="55.50" height="21.40" rx="3.50" fill="#eeeeee" stroke="#d4d4d4" stroke-width="1.40"/>
<text x="992.26" y="387.30" font-size="11.50" fill="#9a9a9a" stroke="#9a9a9a" stroke-width="0.12" textLength="39.41" lengthAdjust="spacingAndGlyphs">Unit Cost</text>
<rect x="1050.40" y="372.80" width="141.10" height="21.20" rx="3.50" fill="#eef5fd" stroke="#e8a2a2" stroke-width="1.60"/>
<text x="1053.32" y="387.30" font-size="11.50" fill="#9a9a9a" stroke="#9a9a9a" stroke-width="0.12" textLength="20.00" lengthAdjust="spacingAndGlyphs">Note</text>
<text x="24.39" y="381.50" font-size="10.00" fill="#44445e" stroke="#44445e" stroke-width="0.25" textLength="4.52" lengthAdjust="spacingAndGlyphs">2</text>
<rect x="49.90" y="373.90" width="6.70" height="8.70" rx="1.50" fill="#e6e6e6" stroke="#a9a9a9" stroke-width="0.80"/>
<path d="M51.10 378.25 L52.80 381.20 L55.80 374.80" fill="none" stroke="#111" stroke-width="1.7"/>
<rect x="65.60" y="396.85" width="176.10" height="21.20" rx="3.50" fill="#eef5fd" stroke="#e8a2a2" stroke-width="1.60"/>
<text x="68.07" y="411.35" font-size="11.50" fill="#9a9a9a" stroke="#9a9a9a" stroke-width="0.12" textLength="85.57" lengthAdjust="spacingAndGlyphs">ITEM DESCRIPTION</text>
<rect x="250.65" y="396.70" width="24.40" height="18.90" rx="3.00" fill="#ffffff" stroke="#d9d9d9" stroke-width="1.30"/>
<g fill="#2d7fd3"><rect x="262.30" y="401.55" width="1.6" height="8.10"/><path d="M260.70 402.75 L263.10 399.55 L265.50 402.75 Z"/><path d="M260.70 408.45 L263.10 411.65 L265.50 408.45 Z"/></g>
<rect x="284.55" y="396.85" width="61.55" height="21.20" rx="3.50" fill="#eef5fd" stroke="#e8a2a2" stroke-width="1.60"/>
<text x="287.29" y="411.35" font-size="11.50" fill="#9a9a9a" stroke="#9a9a9a" stroke-width="0.12" textLength="29.42" lengthAdjust="spacingAndGlyphs">BATCH</text>
<rect x="353.05" y="396.85" width="40.90" height="21.20" rx="3.50" fill="#eef5fd" stroke="#e8a2a2" stroke-width="1.60"/>
<text x="355.60" y="411.35" font-size="11.50" fill="#9a9a9a" stroke="#9a9a9a" stroke-width="0.12" textLength="30.82" lengthAdjust="spacingAndGlyphs">mm/yy</text>
<rect x="399.55" y="396.85" width="40.65" height="21.20" rx="3.50" fill="#eef5fd" stroke="#e8a2a2" stroke-width="1.60"/>
<text x="402.32" y="411.35" font-size="11.50" fill="#9a9a9a" stroke="#9a9a9a" stroke-width="0.12" textLength="18.52" lengthAdjust="spacingAndGlyphs">MRP</text>
<rect x="446.05" y="396.85" width="47.55" height="21.20" rx="3.50" fill="#eef5fd" stroke="#e8a2a2" stroke-width="1.60"/>
<text x="449.26" y="411.35" font-size="11.50" fill="#9a9a9a" stroke="#9a9a9a" stroke-width="0.12" textLength="19.15" lengthAdjust="spacingAndGlyphs">Rate</text>
<rect x="500.55" y="396.85" width="33.05" height="21.20" rx="3.50" fill="#eef5fd" stroke="#e8a2a2" stroke-width="1.60"/>
<text x="503.56" y="411.35" font-size="11.50" fill="#9a9a9a" stroke="#9a9a9a" stroke-width="0.12" textLength="14.46" lengthAdjust="spacingAndGlyphs">Qty</text>
<rect x="540.20" y="396.85" width="26.50" height="21.20" rx="3.50" fill="#eef5fd" stroke="#e8a2a2" stroke-width="1.60"/>
<text x="543.93" y="411.35" font-size="11.50" fill="#4a4a4a" stroke="#4a4a4a" stroke-width="0.12" textLength="4.13" lengthAdjust="spacingAndGlyphs">1</text>
<rect x="572.60" y="396.75" width="26.70" height="21.40" rx="3.50" fill="#ffffff" stroke="#d4d4d4" stroke-width="1.40"/>
<text x="575.34" y="411.35" font-size="11.50" fill="#9a9a9a" stroke="#9a9a9a" stroke-width="0.12" textLength="18.97" lengthAdjust="spacingAndGlyphs">Free</text>
<rect x="605.10" y="396.75" width="29.45" height="21.40" rx="3.50" fill="#ffffff" stroke="#d4d4d4" stroke-width="1.40"/>
<text x="608.18" y="411.35" font-size="11.50" fill="#9a9a9a" stroke="#9a9a9a" stroke-width="0.12" textLength="22.38" lengthAdjust="spacingAndGlyphs">SAmt</text>
<rect x="641.05" y="396.85" width="40.90" height="21.20" rx="3.50" fill="#eef5fd" stroke="#e8a2a2" stroke-width="1.60"/>
<text x="644.66" y="411.35" font-size="11.50" fill="#9a9a9a" stroke="#9a9a9a" stroke-width="0.12" textLength="8.37" lengthAdjust="spacingAndGlyphs">%</text>
<rect x="688.05" y="396.85" width="40.55" height="21.20" rx="3.50" fill="#eef5fd" stroke="#e8a2a2" stroke-width="1.60"/>
<text x="691.26" y="411.35" font-size="11.50" fill="#9a9a9a" stroke="#9a9a9a" stroke-width="0.12" textLength="8.48" lengthAdjust="spacingAndGlyphs">%</text>
<rect x="734.55" y="396.85" width="40.65" height="21.20" rx="3.50" fill="#eef5fd" stroke="#e8a2a2" stroke-width="1.60"/>
<text x="737.98" y="411.35" font-size="11.50" fill="#9a9a9a" stroke="#9a9a9a" stroke-width="0.12" textLength="8.05" lengthAdjust="spacingAndGlyphs">%</text>
<rect x="780.70" y="396.75" width="41.70" height="21.40" rx="3.50" fill="#eeeeee" stroke="#d4d4d4" stroke-width="1.40"/>
<text x="783.82" y="411.35" font-size="11.50" fill="#9a9a9a" stroke="#9a9a9a" stroke-width="0.12" textLength="21.04" lengthAdjust="spacingAndGlyphs">Disc.</text>
<rect x="827.60" y="396.75" width="44.80" height="21.40" rx="3.50" fill="#eeeeee" stroke="#d4d4d4" stroke-width="1.40"/>
<text x="831.48" y="411.35" font-size="11.50" fill="#9a9a9a" stroke="#9a9a9a" stroke-width="0.12" textLength="32.59" lengthAdjust="spacingAndGlyphs">Amount</text>
<rect x="877.60" y="396.75" width="44.80" height="21.40" rx="3.50" fill="#eeeeee" stroke="#d4d4d4" stroke-width="1.40"/>
<text x="881.38" y="411.35" font-size="11.50" fill="#9a9a9a" stroke="#9a9a9a" stroke-width="0.12" textLength="32.89" lengthAdjust="spacingAndGlyphs">Amount</text>
<rect x="927.60" y="396.75" width="56.70" height="21.40" rx="3.50" fill="#eeeeee" stroke="#d4d4d4" stroke-width="1.40"/>
<text x="932.09" y="411.35" font-size="11.50" fill="#9a9a9a" stroke="#9a9a9a" stroke-width="0.12" textLength="21.25" lengthAdjust="spacingAndGlyphs">Total</text>
<rect x="988.80" y="396.75" width="55.50" height="21.40" rx="3.50" fill="#eeeeee" stroke="#d4d4d4" stroke-width="1.40"/>
<text x="992.26" y="411.35" font-size="11.50" fill="#9a9a9a" stroke="#9a9a9a" stroke-width="0.12" textLength="39.41" lengthAdjust="spacingAndGlyphs">Unit Cost</text>
<rect x="1050.40" y="396.85" width="141.10" height="21.20" rx="3.50" fill="#eef5fd" stroke="#e8a2a2" stroke-width="1.60"/>
<text x="1053.32" y="411.35" font-size="11.50" fill="#9a9a9a" stroke="#9a9a9a" stroke-width="0.12" textLength="20.00" lengthAdjust="spacingAndGlyphs">Note</text>
<text x="24.50" y="405.55" font-size="10.00" fill="#44445e" stroke="#44445e" stroke-width="0.25" textLength="4.34" lengthAdjust="spacingAndGlyphs">3</text>
<rect x="49.90" y="397.95" width="6.70" height="8.70" rx="1.50" fill="#e6e6e6" stroke="#a9a9a9" stroke-width="0.80"/>
<path d="M51.10 402.30 L52.80 405.25 L55.80 398.85" fill="none" stroke="#111" stroke-width="1.7"/>
<rect x="65.60" y="420.90" width="176.10" height="21.20" rx="3.50" fill="#eef5fd" stroke="#e8a2a2" stroke-width="1.60"/>
<text x="68.07" y="435.40" font-size="11.50" fill="#9a9a9a" stroke="#9a9a9a" stroke-width="0.12" textLength="85.57" lengthAdjust="spacingAndGlyphs">ITEM DESCRIPTION</text>
<rect x="250.65" y="420.75" width="24.40" height="18.90" rx="3.00" fill="#ffffff" stroke="#d9d9d9" stroke-width="1.30"/>
<g fill="#2d7fd3"><rect x="262.30" y="425.60" width="1.6" height="8.10"/><path d="M260.70 426.80 L263.10 423.60 L265.50 426.80 Z"/><path d="M260.70 432.50 L263.10 435.70 L265.50 432.50 Z"/></g>
<rect x="284.55" y="420.90" width="61.55" height="21.20" rx="3.50" fill="#eef5fd" stroke="#e8a2a2" stroke-width="1.60"/>
<text x="287.29" y="435.40" font-size="11.50" fill="#9a9a9a" stroke="#9a9a9a" stroke-width="0.12" textLength="29.42" lengthAdjust="spacingAndGlyphs">BATCH</text>
<rect x="353.05" y="420.90" width="40.90" height="21.20" rx="3.50" fill="#eef5fd" stroke="#e8a2a2" stroke-width="1.60"/>
<text x="355.60" y="435.40" font-size="11.50" fill="#9a9a9a" stroke="#9a9a9a" stroke-width="0.12" textLength="30.82" lengthAdjust="spacingAndGlyphs">mm/yy</text>
<rect x="399.55" y="420.90" width="40.65" height="21.20" rx="3.50" fill="#eef5fd" stroke="#e8a2a2" stroke-width="1.60"/>
<text x="402.32" y="435.40" font-size="11.50" fill="#9a9a9a" stroke="#9a9a9a" stroke-width="0.12" textLength="18.52" lengthAdjust="spacingAndGlyphs">MRP</text>
<rect x="446.05" y="420.90" width="47.55" height="21.20" rx="3.50" fill="#eef5fd" stroke="#e8a2a2" stroke-width="1.60"/>
<text x="449.26" y="435.40" font-size="11.50" fill="#9a9a9a" stroke="#9a9a9a" stroke-width="0.12" textLength="19.15" lengthAdjust="spacingAndGlyphs">Rate</text>
<rect x="500.55" y="420.90" width="33.05" height="21.20" rx="3.50" fill="#eef5fd" stroke="#e8a2a2" stroke-width="1.60"/>
<text x="503.56" y="435.40" font-size="11.50" fill="#9a9a9a" stroke="#9a9a9a" stroke-width="0.12" textLength="14.46" lengthAdjust="spacingAndGlyphs">Qty</text>
<rect x="540.20" y="420.90" width="26.50" height="21.20" rx="3.50" fill="#eef5fd" stroke="#e8a2a2" stroke-width="1.60"/>
<text x="543.93" y="435.40" font-size="11.50" fill="#4a4a4a" stroke="#4a4a4a" stroke-width="0.12" textLength="4.13" lengthAdjust="spacingAndGlyphs">1</text>
<rect x="572.60" y="420.80" width="26.70" height="21.40" rx="3.50" fill="#ffffff" stroke="#d4d4d4" stroke-width="1.40"/>
<text x="575.34" y="435.40" font-size="11.50" fill="#9a9a9a" stroke="#9a9a9a" stroke-width="0.12" textLength="18.97" lengthAdjust="spacingAndGlyphs">Free</text>
<rect x="605.10" y="420.80" width="29.45" height="21.40" rx="3.50" fill="#ffffff" stroke="#d4d4d4" stroke-width="1.40"/>
<text x="608.18" y="435.40" font-size="11.50" fill="#9a9a9a" stroke="#9a9a9a" stroke-width="0.12" textLength="22.38" lengthAdjust="spacingAndGlyphs">SAmt</text>
<rect x="641.05" y="420.90" width="40.90" height="21.20" rx="3.50" fill="#eef5fd" stroke="#e8a2a2" stroke-width="1.60"/>
<text x="644.66" y="435.40" font-size="11.50" fill="#9a9a9a" stroke="#9a9a9a" stroke-width="0.12" textLength="8.37" lengthAdjust="spacingAndGlyphs">%</text>
<rect x="688.05" y="420.90" width="40.55" height="21.20" rx="3.50" fill="#eef5fd" stroke="#e8a2a2" stroke-width="1.60"/>
<text x="691.26" y="435.40" font-size="11.50" fill="#9a9a9a" stroke="#9a9a9a" stroke-width="0.12" textLength="8.48" lengthAdjust="spacingAndGlyphs">%</text>
<rect x="734.55" y="420.90" width="40.65" height="21.20" rx="3.50" fill="#eef5fd" stroke="#e8a2a2" stroke-width="1.60"/>
<text x="737.98" y="435.40" font-size="11.50" fill="#9a9a9a" stroke="#9a9a9a" stroke-width="0.12" textLength="8.05" lengthAdjust="spacingAndGlyphs">%</text>
<rect x="780.70" y="420.80" width="41.70" height="21.40" rx="3.50" fill="#eeeeee" stroke="#d4d4d4" stroke-width="1.40"/>
<text x="783.82" y="435.40" font-size="11.50" fill="#9a9a9a" stroke="#9a9a9a" stroke-width="0.12" textLength="21.04" lengthAdjust="spacingAndGlyphs">Disc.</text>
<rect x="827.60" y="420.80" width="44.80" height="21.40" rx="3.50" fill="#eeeeee" stroke="#d4d4d4" stroke-width="1.40"/>
<text x="831.48" y="435.40" font-size="11.50" fill="#9a9a9a" stroke="#9a9a9a" stroke-width="0.12" textLength="32.59" lengthAdjust="spacingAndGlyphs">Amount</text>
<rect x="877.60" y="420.80" width="44.80" height="21.40" rx="3.50" fill="#eeeeee" stroke="#d4d4d4" stroke-width="1.40"/>
<text x="881.38" y="435.40" font-size="11.50" fill="#9a9a9a" stroke="#9a9a9a" stroke-width="0.12" textLength="32.89" lengthAdjust="spacingAndGlyphs">Amount</text>
<rect x="927.60" y="420.80" width="56.70" height="21.40" rx="3.50" fill="#eeeeee" stroke="#d4d4d4" stroke-width="1.40"/>
<text x="932.09" y="435.40" font-size="11.50" fill="#9a9a9a" stroke="#9a9a9a" stroke-width="0.12" textLength="21.25" lengthAdjust="spacingAndGlyphs">Total</text>
<rect x="988.80" y="420.80" width="55.50" height="21.40" rx="3.50" fill="#eeeeee" stroke="#d4d4d4" stroke-width="1.40"/>
<text x="992.26" y="435.40" font-size="11.50" fill="#9a9a9a" stroke="#9a9a9a" stroke-width="0.12" textLength="39.41" lengthAdjust="spacingAndGlyphs">Unit Cost</text>
<rect x="1050.40" y="420.90" width="141.10" height="21.20" rx="3.50" fill="#eef5fd" stroke="#e8a2a2" stroke-width="1.60"/>
<text x="1053.32" y="435.40" font-size="11.50" fill="#9a9a9a" stroke="#9a9a9a" stroke-width="0.12" textLength="20.00" lengthAdjust="spacingAndGlyphs">Note</text>
<text x="24.63" y="429.60" font-size="10.00" fill="#44445e" stroke="#44445e" stroke-width="0.25" textLength="4.08" lengthAdjust="spacingAndGlyphs">4</text>
<rect x="49.90" y="422.00" width="6.70" height="8.70" rx="1.50" fill="#e6e6e6" stroke="#a9a9a9" stroke-width="0.80"/>
<path d="M51.10 426.35 L52.80 429.30 L55.80 422.90" fill="none" stroke="#111" stroke-width="1.7"/>
<rect x="65.60" y="444.95" width="176.10" height="21.20" rx="3.50" fill="#eef5fd" stroke="#e8a2a2" stroke-width="1.60"/>
<text x="68.07" y="459.45" font-size="11.50" fill="#9a9a9a" stroke="#9a9a9a" stroke-width="0.12" textLength="85.57" lengthAdjust="spacingAndGlyphs">ITEM DESCRIPTION</text>
<rect x="250.65" y="444.80" width="24.40" height="18.90" rx="3.00" fill="#ffffff" stroke="#d9d9d9" stroke-width="1.30"/>
<g fill="#2d7fd3"><rect x="262.30" y="449.65" width="1.6" height="8.10"/><path d="M260.70 450.85 L263.10 447.65 L265.50 450.85 Z"/><path d="M260.70 456.55 L263.10 459.75 L265.50 456.55 Z"/></g>
<rect x="284.55" y="444.95" width="61.55" height="21.20" rx="3.50" fill="#eef5fd" stroke="#e8a2a2" stroke-width="1.60"/>
<text x="287.29" y="459.45" font-size="11.50" fill="#9a9a9a" stroke="#9a9a9a" stroke-width="0.12" textLength="29.42" lengthAdjust="spacingAndGlyphs">BATCH</text>
<rect x="353.05" y="444.95" width="40.90" height="21.20" rx="3.50" fill="#eef5fd" stroke="#e8a2a2" stroke-width="1.60"/>
<text x="355.60" y="459.45" font-size="11.50" fill="#9a9a9a" stroke="#9a9a9a" stroke-width="0.12" textLength="30.82" lengthAdjust="spacingAndGlyphs">mm/yy</text>
<rect x="399.55" y="444.95" width="40.65" height="21.20" rx="3.50" fill="#eef5fd" stroke="#e8a2a2" stroke-width="1.60"/>
<text x="402.32" y="459.45" font-size="11.50" fill="#9a9a9a" stroke="#9a9a9a" stroke-width="0.12" textLength="18.52" lengthAdjust="spacingAndGlyphs">MRP</text>
<rect x="446.05" y="444.95" width="47.55" height="21.20" rx="3.50" fill="#eef5fd" stroke="#e8a2a2" stroke-width="1.60"/>
<text x="449.26" y="459.45" font-size="11.50" fill="#9a9a9a" stroke="#9a9a9a" stroke-width="0.12" textLength="19.15" lengthAdjust="spacingAndGlyphs">Rate</text>
<rect x="500.55" y="444.95" width="33.05" height="21.20" rx="3.50" fill="#eef5fd" stroke="#e8a2a2" stroke-width="1.60"/>
<text x="503.56" y="459.45" font-size="11.50" fill="#9a9a9a" stroke="#9a9a9a" stroke-width="0.12" textLength="14.46" lengthAdjust="spacingAndGlyphs">Qty</text>
<rect x="540.20" y="444.95" width="26.50" height="21.20" rx="3.50" fill="#eef5fd" stroke="#e8a2a2" stroke-width="1.60"/>
<text x="543.93" y="459.45" font-size="11.50" fill="#4a4a4a" stroke="#4a4a4a" stroke-width="0.12" textLength="4.13" lengthAdjust="spacingAndGlyphs">1</text>
<rect x="572.60" y="444.85" width="26.70" height="21.40" rx="3.50" fill="#ffffff" stroke="#d4d4d4" stroke-width="1.40"/>
<text x="575.34" y="459.45" font-size="11.50" fill="#9a9a9a" stroke="#9a9a9a" stroke-width="0.12" textLength="18.97" lengthAdjust="spacingAndGlyphs">Free</text>
<rect x="605.10" y="444.85" width="29.45" height="21.40" rx="3.50" fill="#ffffff" stroke="#d4d4d4" stroke-width="1.40"/>
<text x="608.18" y="459.45" font-size="11.50" fill="#9a9a9a" stroke="#9a9a9a" stroke-width="0.12" textLength="22.38" lengthAdjust="spacingAndGlyphs">SAmt</text>
<rect x="641.05" y="444.95" width="40.90" height="21.20" rx="3.50" fill="#eef5fd" stroke="#e8a2a2" stroke-width="1.60"/>
<text x="644.66" y="459.45" font-size="11.50" fill="#9a9a9a" stroke="#9a9a9a" stroke-width="0.12" textLength="8.37" lengthAdjust="spacingAndGlyphs">%</text>
<rect x="688.05" y="444.95" width="40.55" height="21.20" rx="3.50" fill="#eef5fd" stroke="#e8a2a2" stroke-width="1.60"/>
<text x="691.26" y="459.45" font-size="11.50" fill="#9a9a9a" stroke="#9a9a9a" stroke-width="0.12" textLength="8.48" lengthAdjust="spacingAndGlyphs">%</text>
<rect x="734.55" y="444.95" width="40.65" height="21.20" rx="3.50" fill="#eef5fd" stroke="#e8a2a2" stroke-width="1.60"/>
<text x="737.98" y="459.45" font-size="11.50" fill="#9a9a9a" stroke="#9a9a9a" stroke-width="0.12" textLength="8.05" lengthAdjust="spacingAndGlyphs">%</text>
<rect x="780.70" y="444.85" width="41.70" height="21.40" rx="3.50" fill="#eeeeee" stroke="#d4d4d4" stroke-width="1.40"/>
<text x="783.82" y="459.45" font-size="11.50" fill="#9a9a9a" stroke="#9a9a9a" stroke-width="0.12" textLength="21.04" lengthAdjust="spacingAndGlyphs">Disc.</text>
<rect x="827.60" y="444.85" width="44.80" height="21.40" rx="3.50" fill="#eeeeee" stroke="#d4d4d4" stroke-width="1.40"/>
<text x="831.48" y="459.45" font-size="11.50" fill="#9a9a9a" stroke="#9a9a9a" stroke-width="0.12" textLength="32.59" lengthAdjust="spacingAndGlyphs">Amount</text>
<rect x="877.60" y="444.85" width="44.80" height="21.40" rx="3.50" fill="#eeeeee" stroke="#d4d4d4" stroke-width="1.40"/>
<text x="881.38" y="459.45" font-size="11.50" fill="#9a9a9a" stroke="#9a9a9a" stroke-width="0.12" textLength="32.89" lengthAdjust="spacingAndGlyphs">Amount</text>
<rect x="927.60" y="444.85" width="56.70" height="21.40" rx="3.50" fill="#eeeeee" stroke="#d4d4d4" stroke-width="1.40"/>
<text x="932.09" y="459.45" font-size="11.50" fill="#9a9a9a" stroke="#9a9a9a" stroke-width="0.12" textLength="21.25" lengthAdjust="spacingAndGlyphs">Total</text>
<rect x="988.80" y="444.85" width="55.50" height="21.40" rx="3.50" fill="#eeeeee" stroke="#d4d4d4" stroke-width="1.40"/>
<text x="992.26" y="459.45" font-size="11.50" fill="#9a9a9a" stroke="#9a9a9a" stroke-width="0.12" textLength="39.41" lengthAdjust="spacingAndGlyphs">Unit Cost</text>
<rect x="1050.40" y="444.95" width="141.10" height="21.20" rx="3.50" fill="#eef5fd" stroke="#e8a2a2" stroke-width="1.60"/>
<text x="1053.32" y="459.45" font-size="11.50" fill="#9a9a9a" stroke="#9a9a9a" stroke-width="0.12" textLength="20.00" lengthAdjust="spacingAndGlyphs">Note</text>
<text x="24.49" y="453.65" font-size="10.00" fill="#44445e" stroke="#44445e" stroke-width="0.25" textLength="4.34" lengthAdjust="spacingAndGlyphs">5</text>
<rect x="49.90" y="446.05" width="6.70" height="8.70" rx="1.50" fill="#e6e6e6" stroke="#a9a9a9" stroke-width="0.80"/>
<path d="M51.10 450.40 L52.80 453.35 L55.80 446.95" fill="none" stroke="#111" stroke-width="1.7"/>
<rect x="65.60" y="469.00" width="176.10" height="21.20" rx="3.50" fill="#eef5fd" stroke="#e8a2a2" stroke-width="1.60"/>
<text x="68.07" y="483.50" font-size="11.50" fill="#9a9a9a" stroke="#9a9a9a" stroke-width="0.12" textLength="85.57" lengthAdjust="spacingAndGlyphs">ITEM DESCRIPTION</text>
<rect x="250.65" y="468.85" width="24.40" height="18.90" rx="3.00" fill="#ffffff" stroke="#d9d9d9" stroke-width="1.30"/>
<g fill="#2d7fd3"><rect x="262.30" y="473.70" width="1.6" height="8.10"/><path d="M260.70 474.90 L263.10 471.70 L265.50 474.90 Z"/><path d="M260.70 480.60 L263.10 483.80 L265.50 480.60 Z"/></g>
<rect x="284.55" y="469.00" width="61.55" height="21.20" rx="3.50" fill="#eef5fd" stroke="#e8a2a2" stroke-width="1.60"/>
<text x="287.29" y="483.50" font-size="11.50" fill="#9a9a9a" stroke="#9a9a9a" stroke-width="0.12" textLength="29.42" lengthAdjust="spacingAndGlyphs">BATCH</text>
<rect x="353.05" y="469.00" width="40.90" height="21.20" rx="3.50" fill="#eef5fd" stroke="#e8a2a2" stroke-width="1.60"/>
<text x="355.60" y="483.50" font-size="11.50" fill="#9a9a9a" stroke="#9a9a9a" stroke-width="0.12" textLength="30.82" lengthAdjust="spacingAndGlyphs">mm/yy</text>
<rect x="399.55" y="469.00" width="40.65" height="21.20" rx="3.50" fill="#eef5fd" stroke="#e8a2a2" stroke-width="1.60"/>
<text x="402.32" y="483.50" font-size="11.50" fill="#9a9a9a" stroke="#9a9a9a" stroke-width="0.12" textLength="18.52" lengthAdjust="spacingAndGlyphs">MRP</text>
<rect x="446.05" y="469.00" width="47.55" height="21.20" rx="3.50" fill="#eef5fd" stroke="#e8a2a2" stroke-width="1.60"/>
<text x="449.26" y="483.50" font-size="11.50" fill="#9a9a9a" stroke="#9a9a9a" stroke-width="0.12" textLength="19.15" lengthAdjust="spacingAndGlyphs">Rate</text>
<rect x="500.55" y="469.00" width="33.05" height="21.20" rx="3.50" fill="#eef5fd" stroke="#e8a2a2" stroke-width="1.60"/>
<text x="503.56" y="483.50" font-size="11.50" fill="#9a9a9a" stroke="#9a9a9a" stroke-width="0.12" textLength="14.46" lengthAdjust="spacingAndGlyphs">Qty</text>
<rect x="540.20" y="469.00" width="26.50" height="21.20" rx="3.50" fill="#eef5fd" stroke="#e8a2a2" stroke-width="1.60"/>
<text x="543.93" y="483.50" font-size="11.50" fill="#4a4a4a" stroke="#4a4a4a" stroke-width="0.12" textLength="4.13" lengthAdjust="spacingAndGlyphs">1</text>
<rect x="572.60" y="468.90" width="26.70" height="21.40" rx="3.50" fill="#ffffff" stroke="#d4d4d4" stroke-width="1.40"/>
<text x="575.34" y="483.50" font-size="11.50" fill="#9a9a9a" stroke="#9a9a9a" stroke-width="0.12" textLength="18.97" lengthAdjust="spacingAndGlyphs">Free</text>
<rect x="605.10" y="468.90" width="29.45" height="21.40" rx="3.50" fill="#ffffff" stroke="#d4d4d4" stroke-width="1.40"/>
<text x="608.18" y="483.50" font-size="11.50" fill="#9a9a9a" stroke="#9a9a9a" stroke-width="0.12" textLength="22.38" lengthAdjust="spacingAndGlyphs">SAmt</text>
<rect x="641.05" y="469.00" width="40.90" height="21.20" rx="3.50" fill="#eef5fd" stroke="#e8a2a2" stroke-width="1.60"/>
<text x="644.66" y="483.50" font-size="11.50" fill="#9a9a9a" stroke="#9a9a9a" stroke-width="0.12" textLength="8.37" lengthAdjust="spacingAndGlyphs">%</text>
<rect x="688.05" y="469.00" width="40.55" height="21.20" rx="3.50" fill="#eef5fd" stroke="#e8a2a2" stroke-width="1.60"/>
<text x="691.26" y="483.50" font-size="11.50" fill="#9a9a9a" stroke="#9a9a9a" stroke-width="0.12" textLength="8.48" lengthAdjust="spacingAndGlyphs">%</text>
<rect x="734.55" y="469.00" width="40.65" height="21.20" rx="3.50" fill="#eef5fd" stroke="#e8a2a2" stroke-width="1.60"/>
<text x="737.98" y="483.50" font-size="11.50" fill="#9a9a9a" stroke="#9a9a9a" stroke-width="0.12" textLength="8.05" lengthAdjust="spacingAndGlyphs">%</text>
<rect x="780.70" y="468.90" width="41.70" height="21.40" rx="3.50" fill="#eeeeee" stroke="#d4d4d4" stroke-width="1.40"/>
<text x="783.82" y="483.50" font-size="11.50" fill="#9a9a9a" stroke="#9a9a9a" stroke-width="0.12" textLength="21.04" lengthAdjust="spacingAndGlyphs">Disc.</text>
<rect x="827.60" y="468.90" width="44.80" height="21.40" rx="3.50" fill="#eeeeee" stroke="#d4d4d4" stroke-width="1.40"/>
<text x="831.48" y="483.50" font-size="11.50" fill="#9a9a9a" stroke="#9a9a9a" stroke-width="0.12" textLength="32.59" lengthAdjust="spacingAndGlyphs">Amount</text>
<rect x="877.60" y="468.90" width="44.80" height="21.40" rx="3.50" fill="#eeeeee" stroke="#d4d4d4" stroke-width="1.40"/>
<text x="881.38" y="483.50" font-size="11.50" fill="#9a9a9a" stroke="#9a9a9a" stroke-width="0.12" textLength="32.89" lengthAdjust="spacingAndGlyphs">Amount</text>
<rect x="927.60" y="468.90" width="56.70" height="21.40" rx="3.50" fill="#eeeeee" stroke="#d4d4d4" stroke-width="1.40"/>
<text x="932.09" y="483.50" font-size="11.50" fill="#9a9a9a" stroke="#9a9a9a" stroke-width="0.12" textLength="21.25" lengthAdjust="spacingAndGlyphs">Total</text>
<rect x="988.80" y="468.90" width="55.50" height="21.40" rx="3.50" fill="#eeeeee" stroke="#d4d4d4" stroke-width="1.40"/>
<text x="992.26" y="483.50" font-size="11.50" fill="#9a9a9a" stroke="#9a9a9a" stroke-width="0.12" textLength="39.41" lengthAdjust="spacingAndGlyphs">Unit Cost</text>
<rect x="1050.40" y="469.00" width="141.10" height="21.20" rx="3.50" fill="#eef5fd" stroke="#e8a2a2" stroke-width="1.60"/>
<text x="1053.32" y="483.50" font-size="11.50" fill="#9a9a9a" stroke="#9a9a9a" stroke-width="0.12" textLength="20.00" lengthAdjust="spacingAndGlyphs">Note</text>
<text x="24.39" y="477.70" font-size="10.00" fill="#44445e" stroke="#44445e" stroke-width="0.25" textLength="4.46" lengthAdjust="spacingAndGlyphs">6</text>
<rect x="49.90" y="470.10" width="6.70" height="8.70" rx="1.50" fill="#e6e6e6" stroke="#a9a9a9" stroke-width="0.80"/>
<path d="M51.10 474.45 L52.80 477.40 L55.80 471.00" fill="none" stroke="#111" stroke-width="1.7"/>
<rect x="65.60" y="493.05" width="176.10" height="21.20" rx="3.50" fill="#eef5fd" stroke="#e8a2a2" stroke-width="1.60"/>
<text x="68.07" y="507.55" font-size="11.50" fill="#9a9a9a" stroke="#9a9a9a" stroke-width="0.12" textLength="85.57" lengthAdjust="spacingAndGlyphs">ITEM DESCRIPTION</text>
<rect x="250.65" y="492.90" width="24.40" height="18.90" rx="3.00" fill="#ffffff" stroke="#d9d9d9" stroke-width="1.30"/>
<g fill="#2d7fd3"><rect x="262.30" y="497.75" width="1.6" height="8.10"/><path d="M260.70 498.95 L263.10 495.75 L265.50 498.95 Z"/><path d="M260.70 504.65 L263.10 507.85 L265.50 504.65 Z"/></g>
<rect x="284.55" y="493.05" width="61.55" height="21.20" rx="3.50" fill="#eef5fd" stroke="#e8a2a2" stroke-width="1.60"/>
<text x="287.29" y="507.55" font-size="11.50" fill="#9a9a9a" stroke="#9a9a9a" stroke-width="0.12" textLength="29.42" lengthAdjust="spacingAndGlyphs">BATCH</text>
<rect x="353.05" y="493.05" width="40.90" height="21.20" rx="3.50" fill="#eef5fd" stroke="#e8a2a2" stroke-width="1.60"/>
<text x="355.60" y="507.55" font-size="11.50" fill="#9a9a9a" stroke="#9a9a9a" stroke-width="0.12" textLength="30.82" lengthAdjust="spacingAndGlyphs">mm/yy</text>
<rect x="399.55" y="493.05" width="40.65" height="21.20" rx="3.50" fill="#eef5fd" stroke="#e8a2a2" stroke-width="1.60"/>
<text x="402.32" y="507.55" font-size="11.50" fill="#9a9a9a" stroke="#9a9a9a" stroke-width="0.12" textLength="18.52" lengthAdjust="spacingAndGlyphs">MRP</text>
<rect x="446.05" y="493.05" width="47.55" height="21.20" rx="3.50" fill="#eef5fd" stroke="#e8a2a2" stroke-width="1.60"/>
<text x="449.26" y="507.55" font-size="11.50" fill="#9a9a9a" stroke="#9a9a9a" stroke-width="0.12" textLength="19.15" lengthAdjust="spacingAndGlyphs">Rate</text>
<rect x="500.55" y="493.05" width="33.05" height="21.20" rx="3.50" fill="#eef5fd" stroke="#e8a2a2" stroke-width="1.60"/>
<text x="503.56" y="507.55" font-size="11.50" fill="#9a9a9a" stroke="#9a9a9a" stroke-width="0.12" textLength="14.46" lengthAdjust="spacingAndGlyphs">Qty</text>
<rect x="540.20" y="493.05" width="26.50" height="21.20" rx="3.50" fill="#eef5fd" stroke="#e8a2a2" stroke-width="1.60"/>
<text x="543.93" y="507.55" font-size="11.50" fill="#4a4a4a" stroke="#4a4a4a" stroke-width="0.12" textLength="4.13" lengthAdjust="spacingAndGlyphs">1</text>
<rect x="572.60" y="492.95" width="26.70" height="21.40" rx="3.50" fill="#ffffff" stroke="#d4d4d4" stroke-width="1.40"/>
<text x="575.34" y="507.55" font-size="11.50" fill="#9a9a9a" stroke="#9a9a9a" stroke-width="0.12" textLength="18.97" lengthAdjust="spacingAndGlyphs">Free</text>
<rect x="605.10" y="492.95" width="29.45" height="21.40" rx="3.50" fill="#ffffff" stroke="#d4d4d4" stroke-width="1.40"/>
<text x="608.18" y="507.55" font-size="11.50" fill="#9a9a9a" stroke="#9a9a9a" stroke-width="0.12" textLength="22.38" lengthAdjust="spacingAndGlyphs">SAmt</text>
<rect x="641.05" y="493.05" width="40.90" height="21.20" rx="3.50" fill="#eef5fd" stroke="#e8a2a2" stroke-width="1.60"/>
<text x="644.66" y="507.55" font-size="11.50" fill="#9a9a9a" stroke="#9a9a9a" stroke-width="0.12" textLength="8.37" lengthAdjust="spacingAndGlyphs">%</text>
<rect x="688.05" y="493.05" width="40.55" height="21.20" rx="3.50" fill="#eef5fd" stroke="#e8a2a2" stroke-width="1.60"/>
<text x="691.26" y="507.55" font-size="11.50" fill="#9a9a9a" stroke="#9a9a9a" stroke-width="0.12" textLength="8.48" lengthAdjust="spacingAndGlyphs">%</text>
<rect x="734.55" y="493.05" width="40.65" height="21.20" rx="3.50" fill="#eef5fd" stroke="#e8a2a2" stroke-width="1.60"/>
<text x="737.98" y="507.55" font-size="11.50" fill="#9a9a9a" stroke="#9a9a9a" stroke-width="0.12" textLength="8.05" lengthAdjust="spacingAndGlyphs">%</text>
<rect x="780.70" y="492.95" width="41.70" height="21.40" rx="3.50" fill="#eeeeee" stroke="#d4d4d4" stroke-width="1.40"/>
<text x="783.82" y="507.55" font-size="11.50" fill="#9a9a9a" stroke="#9a9a9a" stroke-width="0.12" textLength="21.04" lengthAdjust="spacingAndGlyphs">Disc.</text>
<rect x="827.60" y="492.95" width="44.80" height="21.40" rx="3.50" fill="#eeeeee" stroke="#d4d4d4" stroke-width="1.40"/>
<text x="831.48" y="507.55" font-size="11.50" fill="#9a9a9a" stroke="#9a9a9a" stroke-width="0.12" textLength="32.59" lengthAdjust="spacingAndGlyphs">Amount</text>
<rect x="877.60" y="492.95" width="44.80" height="21.40" rx="3.50" fill="#eeeeee" stroke="#d4d4d4" stroke-width="1.40"/>
<text x="881.38" y="507.55" font-size="11.50" fill="#9a9a9a" stroke="#9a9a9a" stroke-width="0.12" textLength="32.89" lengthAdjust="spacingAndGlyphs">Amount</text>
<rect x="927.60" y="492.95" width="56.70" height="21.40" rx="3.50" fill="#eeeeee" stroke="#d4d4d4" stroke-width="1.40"/>
<text x="932.09" y="507.55" font-size="11.50" fill="#9a9a9a" stroke="#9a9a9a" stroke-width="0.12" textLength="21.25" lengthAdjust="spacingAndGlyphs">Total</text>
<rect x="988.80" y="492.95" width="55.50" height="21.40" rx="3.50" fill="#eeeeee" stroke="#d4d4d4" stroke-width="1.40"/>
<text x="992.26" y="507.55" font-size="11.50" fill="#9a9a9a" stroke="#9a9a9a" stroke-width="0.12" textLength="39.41" lengthAdjust="spacingAndGlyphs">Unit Cost</text>
<rect x="1050.40" y="493.05" width="141.10" height="21.20" rx="3.50" fill="#eef5fd" stroke="#e8a2a2" stroke-width="1.60"/>
<text x="1053.32" y="507.55" font-size="11.50" fill="#9a9a9a" stroke="#9a9a9a" stroke-width="0.12" textLength="20.00" lengthAdjust="spacingAndGlyphs">Note</text>
<text x="24.38" y="501.75" font-size="10.00" fill="#44445e" stroke="#44445e" stroke-width="0.25" textLength="4.53" lengthAdjust="spacingAndGlyphs">7</text>
<rect x="49.90" y="494.15" width="6.70" height="8.70" rx="1.50" fill="#e6e6e6" stroke="#a9a9a9" stroke-width="0.80"/>
<path d="M51.10 498.50 L52.80 501.45 L55.80 495.05" fill="none" stroke="#111" stroke-width="1.7"/>
<text x="22.18" y="563.00" font-size="10.00" fill="#555555" stroke="#555555" stroke-width="0.05" textLength="14.44" lengthAdjust="spacingAndGlyphs">Add</text>
<rect x="41.00" y="549.50" width="19.00" height="20.90" rx="3.00" fill="#ffffff" stroke="#cccccc" stroke-width="1.20"/>
<text x="64.02" y="563.00" font-size="10.00" fill="#555555" stroke="#555555" stroke-width="0.05" textLength="20.68" lengthAdjust="spacingAndGlyphs">Rows</text>
<rect x="91.80" y="549.80" width="25.30" height="22.20" rx="3.00" fill="#ffffff" stroke="#cccccc" stroke-width="1.20"/>
<ellipse cx="104.65" cy="560.6" rx="5.65" ry="7.4" fill="#2b7bd0"/><rect x="101.2" y="559.4" width="7" height="2.4" fill="#fff"/><rect x="103.45" y="556.8" width="2.4" height="7.6" fill="#fff"/>
</g>
<rect x="1.5" y="1.5" width="1197" height="797" rx="9" ry="9" fill="none" stroke="#02a98f" stroke-width="3"/>
</svg>
</body></html>
